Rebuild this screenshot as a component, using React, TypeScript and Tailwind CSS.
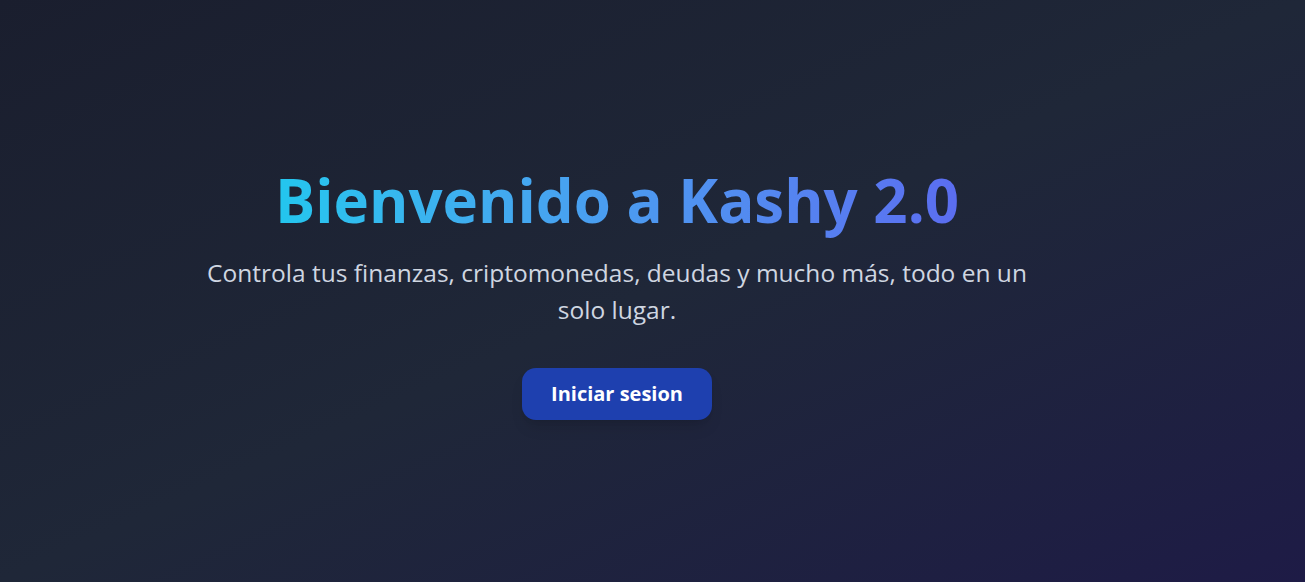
import React from 'react';

const App: React.FC = () => {
  return (
    <div
      className="min-h-screen w-full flex items-center justify-center bg-gradient-to-br from-[#1a1e2e] via-[#1f2738] to-[#1e1b46] pr-[71px] pt-2"
      style={{ fontFamily: '"Open Sans", "Noto Sans", sans-serif' }}
    >
      <div className="flex flex-col items-center text-center">
        <h1 className="text-6xl font-bold leading-none bg-gradient-to-r from-[#22c6ee] to-[#5b6df0] bg-clip-text text-transparent pb-2">
          Bienvenido a Kashy 2.0
        </h1>
        <p className="mt-4 max-w-[850px] text-[24.5px] leading-[37px] text-[#cfd6e1]">
          Controla tus finanzas, criptomonedas, deudas y mucho más, todo en un solo lugar.
        </p>
        <button className="mt-10 h-[52px] px-[29px] rounded-[14px] bg-[#1e40af] text-white text-xl font-bold shadow-lg">
          Iniciar sesion
        </button>
      </div>
    </div>
  );
};

export default App;
